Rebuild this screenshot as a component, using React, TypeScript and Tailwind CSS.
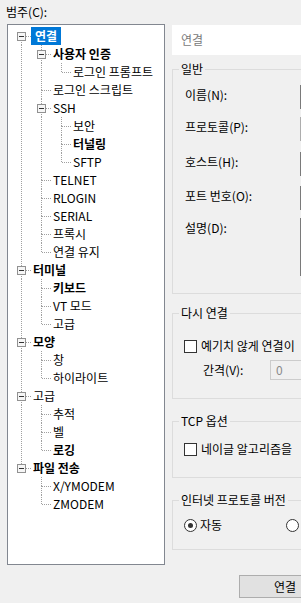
type TreeNode = {
  label: string;
  bold?: boolean;
  selected?: boolean;
  children?: TreeNode[];
};

const tree: TreeNode[] = [
  {
    label: "연결",
    bold: true,
    selected: true,
    children: [
      { label: "사용자 인증", bold: true, children: [{ label: "로그인 프롬프트" }] },
      { label: "로그인 스크립트" },
      {
        label: "SSH",
        children: [{ label: "보안" }, { label: "터널링", bold: true }, { label: "SFTP" }],
      },
      { label: "TELNET" },
      { label: "RLOGIN" },
      { label: "SERIAL" },
      { label: "프록시" },
      { label: "연결 유지" },
    ],
  },
  {
    label: "터미널",
    bold: true,
    children: [{ label: "키보드", bold: true }, { label: "VT 모드" }, { label: "고급" }],
  },
  { label: "모양", bold: true, children: [{ label: "창" }, { label: "하이라이트" }] },
  {
    label: "고급",
    children: [{ label: "추적" }, { label: "벨" }, { label: "로깅", bold: true }],
  },
  {
    label: "파일 전송",
    bold: true,
    children: [{ label: "X/YMODEM" }, { label: "ZMODEM" }],
  },
];

type Row = {
  node: TreeNode;
  guides: boolean[];
  last: boolean;
  first: boolean;
};

function flatten(nodes: TreeNode[], guides: boolean[], out: Row[]) {
  nodes.forEach((node, i) => {
    const last = i === nodes.length - 1;
    out.push({ node, guides, last, first: guides.length === 0 && i === 0 });
    if (node.children) flatten(node.children, [...guides, !last], out);
  });
  return out;
}

const rows = flatten(tree, [], []);

function Guide({ on }: { on: boolean }) {
  return (
    <svg width="20" height="18" className="shrink-0">
      {on && <line x1="10.5" y1="0" x2="10.5" y2="18" stroke="#a0a0a0" strokeDasharray="1 1" />}
    </svg>
  );
}

function Connector({ row }: { row: Row }) {
  const open = !!row.node.children;
  return (
    <svg width="20" height="18" className="shrink-0">
      {!row.first && <line x1="10.5" y1="0" x2="10.5" y2="9" stroke="#a0a0a0" strokeDasharray="1 1" />}
      {!row.last && <line x1="10.5" y1="9" x2="10.5" y2="18" stroke="#a0a0a0" strokeDasharray="1 1" />}
      <line x1="11" y1="9.5" x2="20" y2="9.5" stroke="#a0a0a0" strokeDasharray="1 1" />
      {open && (
        <>
          <rect x="6.5" y="5.5" width="8" height="8" fill="#f6f6f6" stroke="#919191" />
          <line x1="8" y1="9.5" x2="13" y2="9.5" stroke="#333" />
        </>
      )}
    </svg>
  );
}

function Group({ title, className, children }: { title: string; className: string; children: React.ReactNode }) {
  return (
    <div className="flex flex-col">
      <span className="relative z-10 -mb-[8px] ml-[7px] self-start bg-[#f0f0f0] px-[2px] leading-[16px]">{title}</span>
      <div className={"border border-[#dcdcdc] " + className}>{children}</div>
    </div>
  );
}

function Field({ label, h, mt, combo }: { label: string; h: string; mt: string; combo?: boolean }) {
  return (
    <div className={"flex items-start " + mt}>
      <span className="mt-[2px] w-[115px] shrink-0 leading-[16px]">{label}</span>
      <div
        className={
          "w-[80px] " + h + (combo ? " border border-[#adadad] bg-[#e1e1e1]" : " border border-[#7a7a7a] bg-white")
        }
      />
    </div>
  );
}

export default function App() {
  return (
    <div className="flex h-[603px] w-[301px] overflow-hidden bg-[#f0f0f0] font-['Noto_Sans_CJK_KR',sans-serif] text-[12px] text-black">
      <div className="flex w-[165px] shrink-0 flex-col pl-[7px] pt-[4px]">
        <div className="-ml-[1px] h-[20px] leading-[16px]">범주(C):</div>
        <div className="h-[541px] border border-[#828790] bg-white pl-[3px] pt-[2px]">
          {rows.map((row, i) => (
            <div key={i} className="flex h-[18px]">
              {row.guides.map((g, j) => (
                <Guide key={j} on={g} />
              ))}
              <Connector row={row} />
              <span
                className={
                  "whitespace-nowrap leading-[18px] " +
                  (row.node.selected ? "bg-[#0078d7] px-[4px] text-white " : "px-[2px] ") +
                  (row.node.bold ? "font-bold" : "")
                }
              >
                {row.node.label}
              </span>
            </div>
          ))}
        </div>
      </div>

      <div className="ml-[7px] flex w-[200px] shrink-0 flex-col pt-[25px]">
        <div className="flex h-[30px] items-center bg-white pl-[9px] text-[#7a7a7a]">연결</div>

        <div className="mt-[6px]">
          <Group title="일반" className="h-[225px] pl-[12px] pt-[15px]">
            <Field label="이름(N):" h="h-[24px]" mt="" />
            <Field label="프로토콜(P):" h="h-[24px]" mt="mt-[8px]" combo />
            <Field label="호스트(H):" h="h-[24px]" mt="mt-[11px]" />
            <Field label="포트 번호(O):" h="h-[24px]" mt="mt-[10px]" />
            <Field label="설명(D):" h="h-[58px]" mt="mt-[8px]" />
          </Group>
        </div>

        <div className="mt-[11px]">
          <Group title="다시 연결" className="h-[86px] pl-[11px] pt-[24px]">
            <label className="flex items-center gap-[4px] leading-[16px]">
              <span className="h-[13px] w-[13px] shrink-0 border border-[#333] bg-white" />
              <span className="whitespace-nowrap">예기치 않게 연결이</span>
            </label>
            <div className="mt-[6px] flex items-center pl-[19px]">
              <span className="w-[67px] shrink-0 leading-[16px]">간격(V):</span>
              <div className="flex h-[20px] w-[60px] items-center border border-[#cccccc] pl-[5px] text-[#8a8a8a]">0</div>
            </div>
          </Group>
        </div>

        <div className="mt-[14px]">
          <Group title="TCP 옵션" className="h-[57px] pl-[11px] pt-[19px]">
            <label className="flex items-center gap-[4px] leading-[16px]">
              <span className="h-[13px] w-[13px] shrink-0 border border-[#333] bg-white" />
              <span className="whitespace-nowrap">네이글 알고리즘을</span>
            </label>
          </Group>
        </div>

        <div className="mt-[14px]">
          <Group title="인터넷 프로토콜 버전" className="h-[50px] pl-[11px] pt-[16px]">
            <div className="flex items-center leading-[16px]">
              <label className="flex w-[102px] shrink-0 items-center gap-[3px]">
                <span className="flex h-[13px] w-[13px] items-center justify-center rounded-full border border-[#333] bg-white">
                  <span className="h-[5px] w-[5px] rounded-full bg-[#333]" />
                </span>
                <span>자동</span>
              </label>
              <span className="h-[13px] w-[13px] shrink-0 rounded-full border border-[#333] bg-white" />
            </div>
          </Group>
        </div>

        <button className="ml-[67px] mt-[25px] h-[23px] w-[92px] border border-[#adadad] bg-[#e1e1e1] leading-[16px]">
          연결
        </button>
      </div>
    </div>
  );
}
